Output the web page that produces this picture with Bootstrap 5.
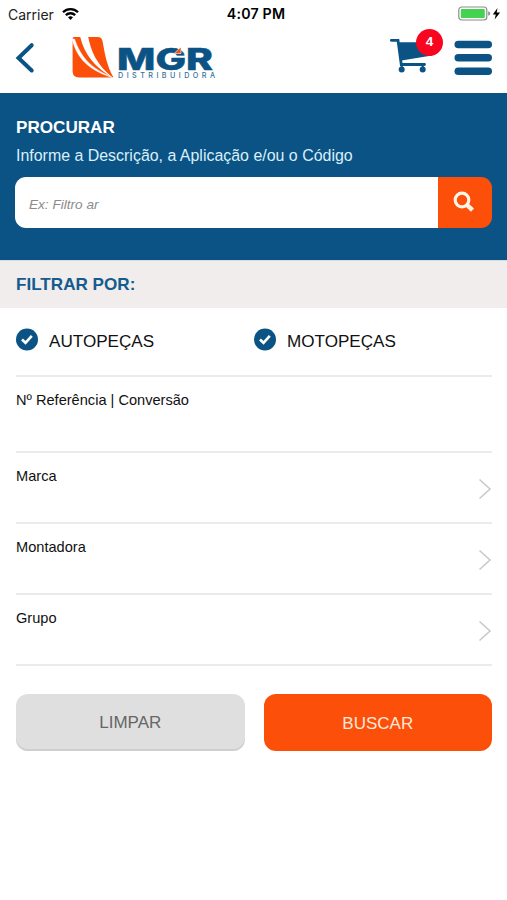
<!DOCTYPE html>
<html lang="pt-BR">
<head>
<meta charset="utf-8">
<meta name="viewport" content="width=device-width, initial-scale=1">
<title>MGR Distribuidora</title>
<link href="https://cdn.jsdelivr.net/npm/bootstrap@5.3.0/dist/css/bootstrap.min.css" rel="stylesheet">
<style>
:root { --mgr-blue: #0b5384; --mgr-orange: #fb4f0a; }
body { font-family: "Liberation Sans", Arial, sans-serif; color: #111; background: #fff; min-height: 900px; }
svg { display: block; flex: none; }
.status-bar { height: 28px; padding: 0 5px 0 8px; font-family: Inter, sans-serif; font-size: 14px; line-height: 27px; color: #222; }
.status-bar .clock { font-size: 14.2px; font-weight: 600; letter-spacing: .2px; color: #000; padding-left: 2px; }
.app-bar { height: 65px; padding: 0 15px; }
.back-icon { margin-top: 14px; }
.brand-logo { margin: 4px 0 0 35px; }
.cart-link { margin-right: 11px; }
.menu-icon { margin-top: 12px; }
.cart-count { top: 1px; left: 27px; width: 27px; height: 27px; background: #f80520; font-size: 13.5px; line-height: 26px; }
.search-panel { height: 167px; background: var(--mgr-blue); padding: 25px 15px 0 15px; }
.search-panel h1 { font-size: 17.1px; line-height: 20px; margin: 0 0 8px 1px; font-weight: 700; }
.search-panel p { font-size: 15.95px; line-height: 20px; margin: 0 0 11px 1px; color: #d9effb; }
.search-group { height: 51px; }
.search-group .form-control { border: 0; border-radius: 11px 0 0 11px; padding: 6px 14px 0; font-size: 13.6px; font-style: italic; }
.search-group .form-control::placeholder { color: #8b8b8b; }
.search-group .btn { width: 54px; background: var(--mgr-orange); border: 0; border-radius: 0 11px 11px 0; padding: 0 0 2px 15px; }
.filter-title { height: 48px; background: #f0edec; color: #155b8d; font-size: 17.1px; line-height: 47px; margin: 0; padding: 0 16px; font-weight: 700; border-top: 1px solid #d3dde4; }
.filter-body { padding: 0 15px 0 16px; }
.kinds { height: 69px; border-bottom: 2px solid #ebebeb; font-size: 17.1px; line-height: 20px; }
.kinds .kind { padding-top: 20px; gap: 11px; }
.kinds .kind span { padding-top: 4px; }
.field { height: 71px; border-bottom: 2px solid #ebebeb; font-size: 14.6px; line-height: 18px; padding-top: 14px; }
.field-ref { height: 76px; }
.field svg { margin-top: 11px; }
.actions { gap: 19px; margin-top: 28px; }
.actions .btn { height: 57px; border: 0; border-radius: 12px; font-size: 17px; }
.btn-clear, .btn-clear:hover { background: #dfdfdf; color: #666; box-shadow: inset 0 -2px 0 #cfcfcf; }
.btn-find, .btn-find:hover { background: var(--mgr-orange); color: #ffe9dc; padding-top: 8px; }
</style>
</head>
<body>
<div class="status-bar row g-0">
  <div class="col d-flex align-items-center">Carrier
    <svg class="ms-2" width="17" height="14" viewBox="0 0 17 14" fill="none" stroke="#000" stroke-width="2.3"><path d="M1 5.2C5.2 1 11.8 1 16 5.2"/><path d="M3.8 8.2c2.7-2.6 6.7-2.6 9.4 0"/><path d="M6 10.3c1.5-1.3 3.5-1.3 5 0L8.500 13z" fill="#000" stroke="none"/></svg>
  </div>
  <div class="col-auto clock">4:07 PM</div>
  <div class="col d-flex justify-content-end align-items-center">
    <svg width="44" height="16" viewBox="0 0 44 16"><rect x=".8" y="1" width="28" height="13" rx="3" fill="#fff" stroke="#8c8c8c" stroke-width="1.200"/><rect x="2.800" y="2.900" width="24" height="9.200" rx="1" fill="#43d351"/><path d="M30.200 5.200q2 .5 2 2.300t-2 2.300z" fill="#8c8c8c"/><path d="M39.500 2 34.800 8.500h3l-1.200 5 5.500-7h-3.400z" fill="#000"/></svg>
  </div>
</div>
<header class="app-bar d-flex align-items-start">
  <svg class="back-icon" width="20" height="32" viewBox="0 0 20 32"><path d="M16.700 3.200 3.500 16 16.700 28.500" fill="none" stroke="#0b5384" stroke-width="4" stroke-linecap="round"/></svg>
  <svg class="brand-logo" width="150" height="50" viewBox="70 32 150 50">
    <path d="M72.600 38.500Q72.600 37 74 37H98Q101.500 37 102.500 41C105 55 107 66 113.500 77.500H79Q72.600 77.500 72.600 71z" fill="#fb4f0a"/>
    <path d="M80 36C83.500 50 90 64 113 78C96 64 91 51 88 36z" fill="#fff"/>
    <path d="M72 39C77 58 88 70 112.500 77.500C90 68 81 57 74.500 39z" fill="#fff" stroke="#fff" stroke-width=".5"/>
    <text x="117" y="69.500" font-family="Inter, sans-serif" font-weight="800" font-size="30" fill="#0b5384" stroke="#0b5384" stroke-width=".5" textLength="96" lengthAdjust="spacingAndGlyphs">MGR</text>
    <path d="M174 53.500 181 47V53.500z" fill="#fb4f0a" stroke="#fff" stroke-width=".6"/>
    <text x="118" y="77.500" font-family="Inter, sans-serif" font-size="7.200" font-weight="500" fill="#346f9b" textLength="97">DISTRIBUIDORA</text>
  </svg>
  <div class="cart-link position-relative ms-auto">
    <svg width="54" height="46" viewBox="389 28 54 46" fill="#0b5384"><path d="M399 42.300H432V55.500L401.500 60.500z"/><path d="M391.300 40.300h6.700l3.300 24.200H424.500" fill="none" stroke="#0b5384" stroke-width="2.800" stroke-linecap="round"/><circle cx="401.700" cy="69.600" r="3"/><circle cx="422.700" cy="69.600" r="3"/><path d="M401.700 65v4M422.700 65v4" stroke="#0b5384" stroke-width="2"/></svg>
    <span class="cart-count position-absolute rounded-circle text-white text-center fw-bold">4</span>
  </div>
  <svg class="menu-icon" width="38" height="36" viewBox="0 0 38 36" fill="#0b5384"><rect x=".5" y=".7" width="37.500" height="7.500" rx="3.750"/><rect x=".5" y="14.100" width="37.500" height="7.500" rx="3.750"/><rect x=".5" y="27.400" width="37.500" height="7.500" rx="3.750"/></svg>
</header>
<section class="search-panel text-white">
  <h1>PROCURAR</h1>
  <p>Informe a Descrição, a Aplicação e/ou o Código</p>
  <div class="input-group search-group">
    <input type="text" class="form-control" placeholder="Ex: Filtro ar" aria-label="Procurar">
    <button class="btn" type="button" aria-label="Buscar"><svg width="22" height="22" viewBox="0 0 22 22" fill="none" stroke="#fff4e8"><circle cx="9" cy="9" r="6.800" stroke-width="3.200"/><path d="m14 14 5.500 5.200" stroke-width="4.400"/></svg></button>
  </div>
</section>
<h2 class="filter-title">FILTRAR POR:</h2>
<main class="filter-body">
  <div class="kinds row g-0">
    <div class="kind col-6 d-flex align-items-start"><svg width="22" height="24" viewBox="0 0 22 24"><circle cx="11" cy="11.500" r="11" fill="#0b5384"/><path d="m6 11.500 3.500 3.300 6.300-7" fill="none" stroke="#fff" stroke-width="2.600"/></svg><span>AUTOPEÇAS</span></div>
    <div class="kind col-6 d-flex align-items-start"><svg width="22" height="24" viewBox="0 0 22 24"><circle cx="11" cy="11.500" r="11" fill="#0b5384"/><path d="m6 11.500 3.500 3.300 6.300-7" fill="none" stroke="#fff" stroke-width="2.600"/></svg><span>MOTOPEÇAS</span></div>
  </div>
  <div class="field field-ref">Nº Referência | Conversão</div>
  <div class="field d-flex justify-content-between">Marca<svg width="14" height="22" viewBox="0 0 14 22"><path d="m1.500 1.500 10.500 9.500L1.500 20.500" fill="none" stroke="#c9c9c9" stroke-width="1.600"/></svg></div>
  <div class="field d-flex justify-content-between">Montadora<svg width="14" height="22" viewBox="0 0 14 22"><path d="m1.500 1.500 10.500 9.500L1.500 20.500" fill="none" stroke="#c9c9c9" stroke-width="1.600"/></svg></div>
  <div class="field d-flex justify-content-between">Grupo<svg width="14" height="22" viewBox="0 0 14 22"><path d="m1.500 1.500 10.500 9.500L1.500 20.500" fill="none" stroke="#c9c9c9" stroke-width="1.600"/></svg></div>
  <div class="actions d-flex">
    <button type="button" class="btn btn-clear flex-fill w-50">LIMPAR</button>
    <button type="button" class="btn btn-find flex-fill w-50">BUSCAR</button>
  </div>
</main>
<script src="https://cdn.jsdelivr.net/npm/bootstrap@5.3.0/dist/js/bootstrap.bundle.min.js"></script>
</body>
</html>
